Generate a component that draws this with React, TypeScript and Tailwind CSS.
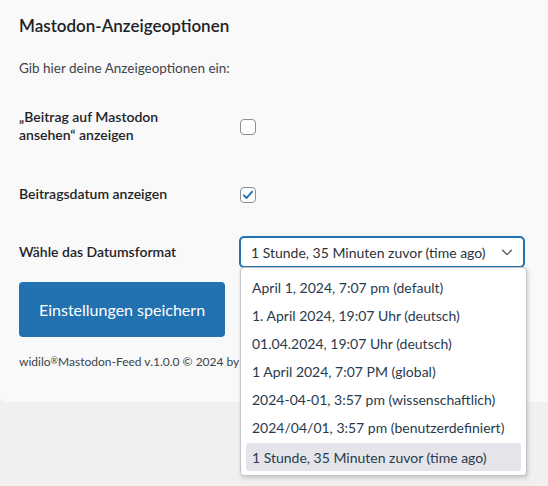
const formats = [
  'April 1, 2024, 7:07 pm (default)',
  '1. April 2024, 19:07 Uhr (deutsch)',
  '01.04.2024, 19:07 Uhr (deutsch)',
  '1 April 2024, 7:07 PM (global)',
  '2024-04-01, 3:57 pm (wissenschaftlich)',
  '2024/04/01, 3:57 pm (benutzerdefiniert)',
  '1 Stunde, 35 Minuten zuvor (time ago)',
];

function Checkbox({ checked }: { checked?: boolean }) {
  return (
    <span className="flex h-4 w-4 items-center justify-center rounded-[4px] border border-[#8c8f94] bg-white">
      {checked && (
        <svg viewBox="0 0 16 16" className="h-[14px] w-[14px]">
          <path d="M3.2 8.4 L6.4 11.4 L12.8 4.2" fill="none" stroke="#2271b1" strokeWidth="2.2" strokeLinecap="round" strokeLinejoin="round" />
        </svg>
      )}
    </span>
  );
}

export default function App() {
  return (
    <div className="min-h-[486px] bg-[#f0f0f1] font-['Lato','Noto_Sans',sans-serif] text-[#1d2327]">
      <div className="rounded-bl-[6px] bg-[#f9f9f9] pb-[31px] pl-[19px] pt-[15px]">
        <h2 className="text-[17px] font-semibold leading-[22px] text-[#1d2327]">Mastodon-Anzeigeoptionen</h2>
        <p className="mt-[22px] text-[13.5px] leading-[18px] text-[#3c434a]">Gib hier deine Anzeigeoptionen ein:</p>

        <div className="mt-[11px] grid grid-cols-[221px_1fr]">
          <div className="flex h-[76px] items-center text-[14px] font-semibold leading-[18px]">
            <span>
              „Beitrag auf Mastodon
              <br />
              ansehen“ anzeigen
            </span>
          </div>
          <div className="flex h-[76px] items-center pt-[2px]">
            <Checkbox />
          </div>

          <div className="flex h-[60px] items-center text-[14px] font-semibold leading-[18px]">Beitragsdatum anzeigen</div>
          <div className="flex h-[60px] items-center pt-[2px]">
            <Checkbox checked />
          </div>

          <div className="flex h-[56px] items-center text-[14px] font-semibold leading-[18px]">Wähle das Datumsformat</div>
          <div className="flex h-[56px] items-center">
            <div className="relative w-[284px]">
              <div className="flex h-[30px] items-center justify-between whitespace-nowrap rounded-[4px] border border-[#2271b1] bg-white pl-[10px] pr-[9px] text-[14px] text-[#2c3338] shadow-[0_0_0_1px_#2271b1]">
                <span>1 Stunde, 35 Minuten zuvor (time ago)</span>
                <svg viewBox="0 0 16 16" className="h-[14px] w-[14px]">
                  <path d="M3 6 L8 11 L13 6" fill="none" stroke="#50575e" strokeWidth="1.6" strokeLinecap="round" strokeLinejoin="round" />
                </svg>
              </div>
              <div className="absolute left-0 top-[30px] z-10 w-[287px] rounded-[4px] border border-[#c3c4c7] bg-white px-[5px] pb-[4px] pt-[5px] shadow-[1px_2px_4px_rgba(0,0,0,0.18)]">
                {formats.map((f, i) => (
                  <div
                    key={f}
                    className={`flex h-[28px] items-center whitespace-nowrap px-[6px] text-[14px] text-[#2a3a4d] ${i === formats.length - 1 ? 'mt-[2px] rounded-[3px] bg-[#e4e4ea]' : ''}`}
                  >
                    {f}
                  </div>
                ))}
              </div>
            </div>
          </div>
        </div>

        <button className="mt-[2px] h-[55px] rounded-[4px] bg-[#2271b1] px-[20px] text-[16px] text-white">Einstellungen speichern</button>

        <p className="mt-[15px] text-[12px] leading-[18px] text-[#3c434a]">
          widilo<span className="text-[9px] align-[2px]">®</span>Mastodon-Feed v.1.0.0 © 2024 by widilo
        </p>
      </div>
    </div>
  );
}
